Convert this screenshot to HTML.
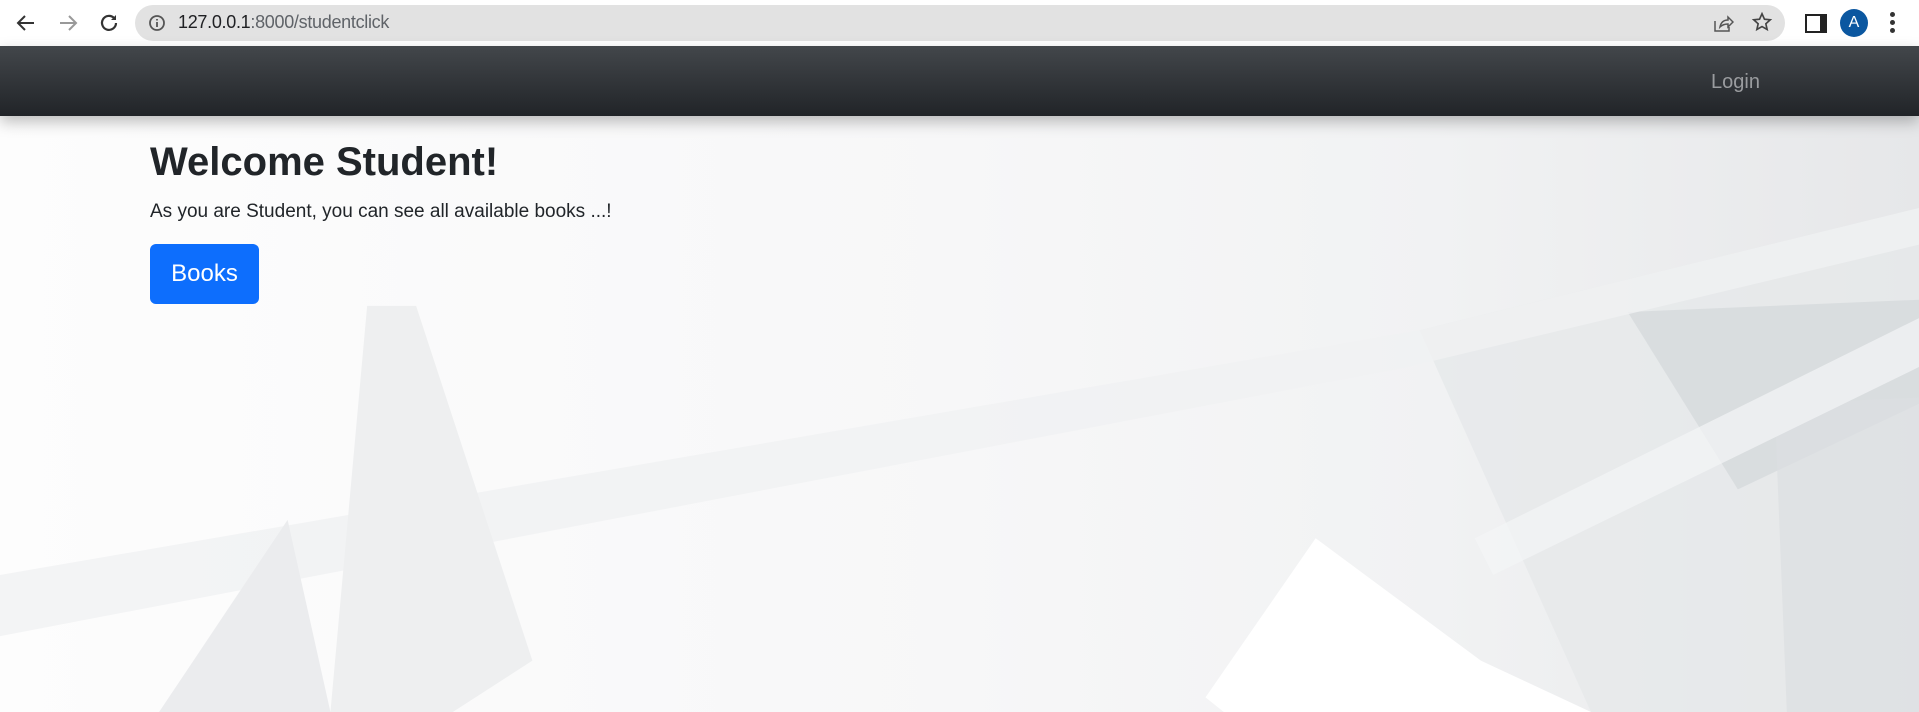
<!DOCTYPE html>
<html><head><style>
html,body{margin:0;padding:0;width:1919px;height:712px;overflow:hidden;background:#f6f7f8;font-family:"Liberation Sans",sans-serif;position:relative}
#bg{position:absolute;left:0;top:0;width:1919px;height:712px}
.chrome{position:absolute;left:0;top:0;width:1919px;height:46px;background:#fff}
.addr{position:absolute;left:135px;top:5px;width:1650px;height:36px;border-radius:18px;background:#e2e2e2}
.url{position:absolute;left:178px;top:12px;font-size:18px;color:#202124;letter-spacing:-0.3px}
.url span{color:#5f6368}
.nav{position:absolute;left:0;top:46px;width:1919px;height:70px;background:linear-gradient(#43474b,#212428);box-shadow:0 6px 14px rgba(0,0,0,.25)}
.login{position:absolute;left:1711px;top:71px;color:#9a9c9f;font-size:20px}
h1{position:absolute;left:150px;top:140px;margin:0;font-size:40px;font-weight:bold;color:#212529}
p{position:absolute;left:150px;top:201px;margin:0;font-size:19px;color:#212529}
.btn{position:absolute;left:150px;top:244px;width:109px;height:60px;background:#0d6efd;border-radius:6px;color:#fff;font-size:24px;text-align:center;line-height:60px}
</style></head><body>
<svg id="bg" viewBox="0 0 1568 582" preserveAspectRatio="none">
<defs>
<linearGradient id="g1" x1="0" x2="1" y1="0" y2="0"><stop offset="0" stop-color="#fdfdfd"/><stop offset=".5" stop-color="#f7f7f8"/><stop offset=".75" stop-color="#f1f2f3"/><stop offset="1" stop-color="#e6e7e9"/></linearGradient>
</defs>
<rect width="1568" height="582" fill="url(#g1)"/>
<polygon points="1160,270 1568,170 1568,582 1300,582" fill="#e6e8ea" opacity=".8"/>
<polygon points="1330,255 1568,245 1568,330 1420,400" fill="#d6d9dc" opacity=".8"/>
<polygon points="1450,330 1568,325 1568,582 1460,582" fill="#dcdee1" opacity=".7"/>
<polygon points="0,470 1160,270 1568,170 1568,200 1150,300 0,520" fill="#f0f1f2" opacity=".8"/>
<polygon points="300,250 340,250 435,540 370,582 270,582" fill="#eeeff0"/>
<polygon points="235,425 270,582 130,582" fill="#ebecee"/>
<polygon points="985,570 1075,440 1210,540 1300,582 1000,582" fill="#ffffff"/>
<polygon points="1205,440 1568,260 1568,300 1220,470" fill="#f4f5f6" opacity=".7"/>
</svg>
<div class="chrome">
<svg style="position:absolute;left:14px;top:11px" width="24" height="24" viewBox="0 0 24 24"><path d="M20 12H5M11 5l-7 7 7 7" stroke="#333" stroke-width="2" fill="none"/></svg>
<svg style="position:absolute;left:56px;top:11px" width="24" height="24" viewBox="0 0 24 24"><path d="M4 12h15M13 5l7 7-7 7" stroke="#999" stroke-width="2" fill="none"/></svg>
<svg style="position:absolute;left:97px;top:11px" width="24" height="24" viewBox="0 0 24 24"><path d="M19 12a7 7 0 1 1-2-5" stroke="#333" stroke-width="2.2" fill="none"/><path d="M19 4v5h-5z" fill="#333"/></svg>
<div class="addr"></div>
<svg style="position:absolute;left:148px;top:14px" width="18" height="18" viewBox="0 0 18 18"><circle cx="9" cy="9" r="7" stroke="#555" stroke-width="1.8" fill="none"/><path d="M9 8v5M9 5v1.5" stroke="#555" stroke-width="1.8"/></svg>
<div class="url">127.0.0.1<span>:8000/studentclick</span></div>
<svg style="position:absolute;left:1712px;top:12px" width="22" height="22" viewBox="0 0 22 22"><path d="M3 9v10h14v-4M8 15c1-5 4-7 8-7V5l5 5-5 5v-3c-3 0-6 1-8 3z" stroke="#555" stroke-width="1.5" fill="none"/></svg>
<svg style="position:absolute;left:1751px;top:11px" width="22" height="22" viewBox="0 0 24 24"><path d="M12 3l2.7 6 6.3.6-4.8 4.3 1.4 6.3L12 17l-5.6 3.2 1.4-6.3L3 9.6 9.3 9z" stroke="#444" stroke-width="1.8" fill="none"/></svg>
<div style="position:absolute;left:1805px;top:14px;width:13px;height:15px;border:2.5px solid #222;border-right-width:7px;background:#fff"></div>
<div style="position:absolute;left:1840px;top:9px;width:28px;height:28px;border-radius:50%;background:#0b57a0;color:#fff;font-size:16px;text-align:center;line-height:28px">A</div>
<div style="position:absolute;left:1890px;top:12px;width:5px;font-size:0">
<div style="width:5px;height:5px;border-radius:50%;background:#333;margin-bottom:3px"></div><div style="width:5px;height:5px;border-radius:50%;background:#333;margin-bottom:3px"></div><div style="width:5px;height:5px;border-radius:50%;background:#333"></div></div>
</div>
<div class="nav"></div>
<div class="login">Login</div>
<h1>Welcome Student!</h1>
<p>As you are Student, you can see all available books ...!</p>
<div class="btn">Books</div>
</body></html>
